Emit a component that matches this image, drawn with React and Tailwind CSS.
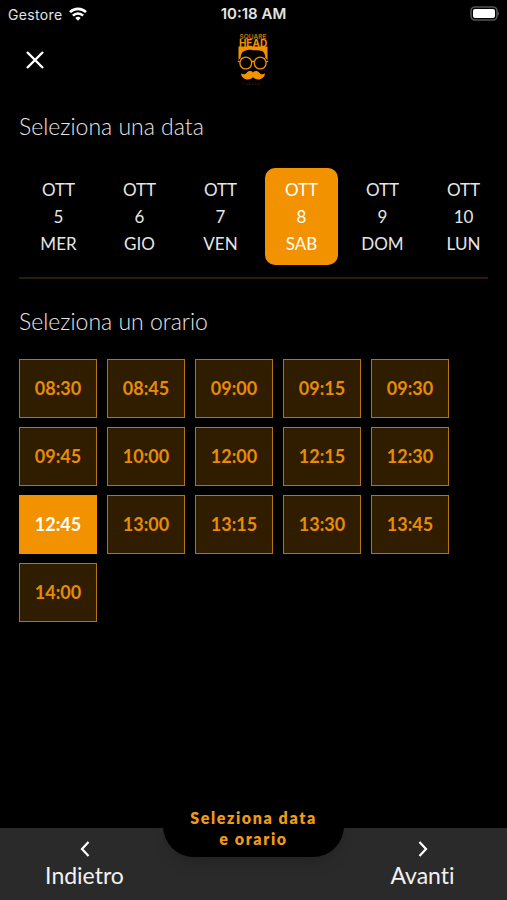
import { useState } from "react";
import clsx from "clsx";

const days = [
  { month: "OTT", day: 5, name: "MER" },
  { month: "OTT", day: 6, name: "GIO" },
  { month: "OTT", day: 7, name: "VEN" },
  { month: "OTT", day: 8, name: "SAB" },
  { month: "OTT", day: 9, name: "DOM" },
  { month: "OTT", day: 10, name: "LUN" },
];

const times = [
  "08:30", "08:45", "09:00", "09:15", "09:30",
  "09:45", "10:00", "12:00", "12:15", "12:30",
  "12:45", "13:00", "13:15", "13:30", "13:45",
  "14:00",
];

function StatusBar() {
  return (
    <div className="grid grid-cols-3 items-center h-7 px-2 font-['Inter',sans-serif] text-[14px] text-[#e4e4e4]">
      <div className="flex items-center gap-[6px]">
        <span className="tracking-wide">Gestore</span>
        <svg width="18" height="14" viewBox="0 0 18 14" fill="none" stroke="white" strokeWidth="2.6">
          <path d="M1 5.2a11.3 11.3 0 0 1 16 0" />
          <path d="M3.9 8.6a7.2 7.2 0 0 1 10.2 0" />
          <path d="M9 13.8 6.3 11a3.8 3.8 0 0 1 5.4 0Z" fill="white" stroke="none" />
        </svg>
      </div>
      <span className="text-center text-[15px] font-semibold whitespace-nowrap">10:18 AM</span>
      <svg className="justify-self-end" width="31" height="16" viewBox="0 0 31 16">
        <rect x="3" y="1" width="26" height="13" rx="4" fill="none" stroke="#555" strokeWidth="1.6" />
        <rect x="5" y="3" width="22" height="9" rx="2" fill="white" />
        <path d="M29.8 5.3c1.400.8 1.400 3.600 0 4.400Z" fill="#666" />
      </svg>
    </div>
  );
}

function Logo() {
  return (
    <svg width="32" height="56" viewBox="0 0 32 56" fill="#f39200" role="img" aria-label="Square Head">
      <text x="16" y="7" textAnchor="middle" fontFamily="Inter, sans-serif" fontSize="6.5" fontWeight="600" fill="#c47a0a">
        SQUARE
      </text>
      <text x="16" y="14.5" textAnchor="middle" fontFamily="Inter, sans-serif" fontSize="10" fontWeight="700">
        HEAD
      </text>
      <path d="M1.500 14.500h29V28L28.300 26c0-3-.8-4.500-2.300-6.500-2.500-1.300-5.500-1-8-1.200-4-.3-6-1.300-9.500.2L5.500 20c-1.300 2-1.800 3.500-1.800 6l-2.200 2Z" />
      <g fill="none" stroke="#f39200" strokeWidth="1.300">
        <circle cx="8.800" cy="31" r="5.900" />
        <circle cx="23.200" cy="31" r="5.900" />
        <path d="M14.400 30q1.600-1.400 3.200 0M3 30 .8 29M29 30l2.200-1" />
      </g>
      <path d="M16 40.500c2-2.200 4.800-1.600 6.300.2 1.700 1.900 3.700 2 5.700.8-.3 3.600-3.500 6.200-7 6-2.300-.1-4-1.300-5-2.300-1 1-2.700 2.200-5 2.300-3.500.2-6.700-2.400-7-6 2 1.200 4 1.100 5.700-.8 1.500-1.800 4.300-2.400 6.300-.2Z" />
      <path d="M5 51h22M9 52.500h14" stroke="#3a2406" strokeWidth=".6" strokeDasharray="2 1" />
    </svg>
  );
}

function Chevron({ d }) {
  return (
    <svg width="20" height="20" viewBox="0 0 20 20" fill="none" stroke="white" strokeWidth="2.2">
      <path d={d} />
    </svg>
  );
}

export default function App() {
  const [day, setDay] = useState(8);
  const [time, setTime] = useState("12:45");

  return (
    <div className="flex flex-col min-h-screen bg-black text-[#e6e6e6] font-['Lato',sans-serif]">
      <StatusBar />
      <header className="grid grid-cols-3 items-center h-16 px-5">
        <button aria-label="Chiudi" className="justify-self-start p-1 cursor-pointer">
          <svg width="22" height="22" viewBox="0 0 22 22" fill="none" stroke="white" strokeWidth="2.4">
            <path d="m3 3 16 16M19 3 3 19" />
          </svg>
        </button>
        <div className="justify-self-center">
          <Logo />
        </div>
      </header>

      <main className="flex-1 px-[19px] pt-[18px] pb-16">
        <h2 className="text-[23px] leading-8 font-light">Seleziona una data</h2>
        <div className="flex gap-2 -mr-5 pl-[3px] mt-[26px] overflow-hidden">
          {days.map((d) => (
            <button
              key={d.day}
              onClick={() => setDay(d.day)}
              className={clsx(
                "flex flex-col items-center shrink-0 w-[73px] py-2 rounded-[10px] text-[17px] leading-[27px] cursor-pointer",
                d.day === day && "bg-[#f39200] text-white"
              )}
            >
              <span>{d.month}</span>
              <span>{d.day}</span>
              <span>{d.name}</span>
            </button>
          ))}
        </div>
        <hr className="mt-3 border-t-2 border-[#2c1d08]" />

        <h2 className="mt-[26px] text-[23px] leading-8 font-light">Seleziona un orario</h2>
        <div className="flex flex-wrap gap-x-[10px] gap-y-[9px] mt-[22px]">
          {times.map((t) => (
            <button
              key={t}
              onClick={() => setTime(t)}
              className={clsx(
                "w-[78px] h-[59px] border text-[18px] font-bold cursor-pointer",
                t === time
                  ? "bg-[#f39200] border-[#f39200] text-white"
                  : "bg-[#301d00] border-[#b57412] text-[#e78c06]"
              )}
            >
              {t}
            </button>
          ))}
        </div>
      </main>

      <footer className="grid grid-cols-3 h-[72px] bg-[#2a2a2a] text-[23px] text-[#f2f2f2] [font-variant-ligatures:none]">
        <button className="flex flex-col items-center pt-[11px] leading-8 cursor-pointer">
          <Chevron d="M13.500 3 7 10l6.500 7" />
          Indietro
        </button>
        <div className="relative flex justify-center">
          <div className="absolute bottom-[43px] w-[181px] pt-3 pb-2 rounded-[32px] bg-black shadow-lg text-center text-[16px] leading-[21px] font-extrabold tracking-widest text-[#f09a1a]">
            Seleziona data
            <br />e orario
          </div>
        </div>
        <button className="flex flex-col items-center pt-[11px] leading-8 cursor-pointer">
          <Chevron d="m6.500 3 6.500 7-6.500 7" />
          Avanti
        </button>
      </footer>
    </div>
  );
}
